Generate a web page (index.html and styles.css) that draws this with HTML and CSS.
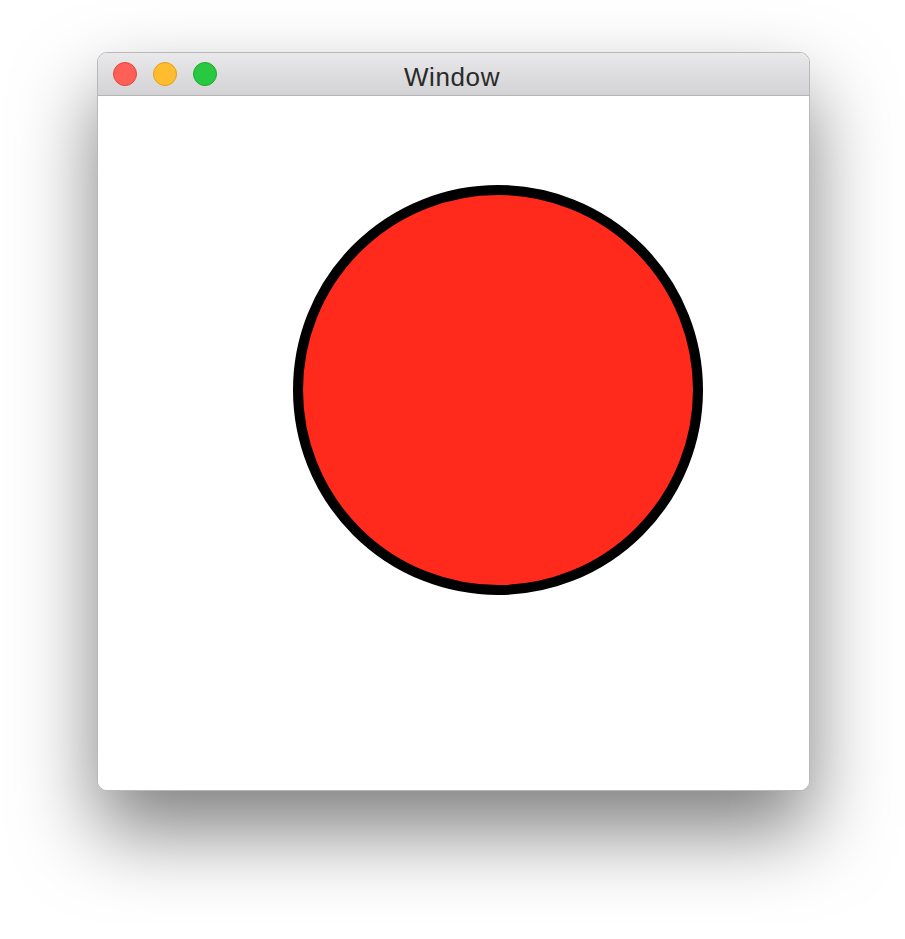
FILE: index.html
```html
<!DOCTYPE html>
<html>
<head>
<meta charset="utf-8">
<link rel="stylesheet" href="styles.css">
</head>
<body>
<div class="window">
  <div class="titlebar">
    <div class="lights">
      <span class="light red"></span>
      <span class="light yellow"></span>
      <span class="light green"></span>
    </div>
    <div class="title">Window</div>
  </div>
  <div class="content">
    <svg class="canvas" width="711" height="694" viewBox="0 0 711 694">
      <circle cx="400" cy="294" r="200" fill="#ff2a1c" stroke="#000" stroke-width="10"/>
    </svg>
  </div>
</div>
</body>
</html>
```
FILE: styles.css
```css
html, body {
  margin: 0;
  padding: 0;
  background: #ffffff;
}
body {
  box-sizing: border-box;
  min-height: 939px;
  padding: 52px 0 0 97px;
}
.window {
  width: 711px;
  height: 737px;
  border: 1px solid #b8b8b8;
  border-radius: 10px;
  overflow: hidden;
  background: #ffffff;
  box-shadow: 0 40px 80px 0 rgba(0,0,0,0.5);
  display: flex;
  flex-direction: column;
}
.titlebar {
  height: 43px;
  background: linear-gradient(#e9e8ea, #d3d2d4);
  border-bottom: 1px solid #b4b3b5;
  display: flex;
  align-items: center;
  position: relative;
}
.lights {
  display: flex;
  gap: 16px;
  padding-left: 15px;
}
.light {
  width: 22px;
  height: 22px;
  border-radius: 50%;
  display: block;
}
.red { background: #fe5f57; border: 1px solid #e2463f; }
.yellow { background: #febc2e; border: 1px solid #e1a116; }
.green { background: #28c840; border: 1px solid #1aab29; }
.title {
  position: absolute;
  left: 0;
  right: 0;
  top: 9px;
  text-align: center;
  font-family: "Liberation Sans", Arial, sans-serif;
  font-size: 26px;
  letter-spacing: 0.6px;
  color: #2a2a2a;
  padding-right: 3px;
}
.content {
  flex: 1;
  background: #ffffff;
}
.canvas {
  display: block;
}
```
